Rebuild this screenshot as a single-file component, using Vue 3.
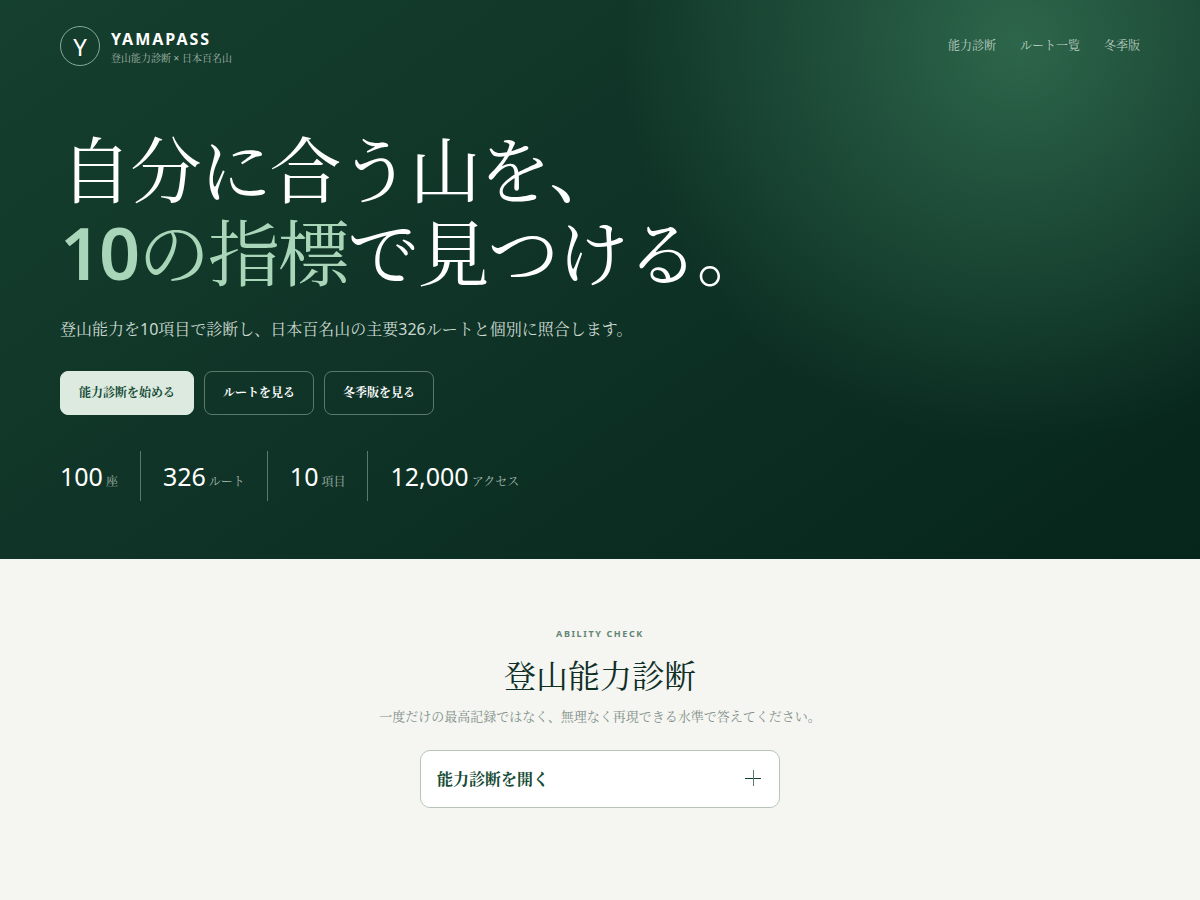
<script setup>
import { ref } from 'vue'

const links = ['能力診断', 'ルート一覧', '冬季版']
const stats = [
  { value: '100', unit: '座' },
  { value: '326', unit: 'ルート' },
  { value: '10', unit: '項目' },
  { value: '12,000', unit: 'アクセス' },
]
const open = ref(false)
</script>

<template>
  <div class="page" lang="ja">
    <header class="hero">
      <nav class="bar">
        <a class="brand" href="#">
          <span class="mark">Y</span>
          <span class="names">
            <strong>YAMAPASS</strong>
            <small>登山能力診断 × 日本百名山</small>
          </span>
        </a>
        <div class="links">
          <a v-for="link in links" :key="link" href="#">{{ link }}</a>
        </div>
      </nav>
      <h1>自分に合う山を、<br><em><b>10</b>の指標</em>で見つける。</h1>
      <p class="lead">登山能力を10項目で診断し、日本百名山の主要326ルートと個別に照合します。</p>
      <div class="actions">
        <button type="button" class="primary">能力診断を始める</button>
        <button type="button">ルートを見る</button>
        <button type="button">冬季版を見る</button>
      </div>
      <div class="stats">
        <div v-for="s in stats" :key="s.unit" class="stat">
          <b>{{ s.value }}</b><span>{{ s.unit }}</span>
        </div>
      </div>
    </header>
    <main class="check">
      <p class="eyebrow">ABILITY CHECK</p>
      <h2>登山能力診断</h2>
      <p class="note">一度だけの最高記録ではなく、無理なく再現できる水準で答えてください。</p>
      <button type="button" class="opener" :aria-expanded="open" @click="open = !open">
        <span>能力診断を開く</span>
        <svg width="16" height="16" viewBox="0 0 16 16" aria-hidden="true">
          <path d="M0 8.5H16" stroke="#123f2d" />
          <path d="M8.5 0V16" stroke="#5c7e6e" />
        </svg>
      </button>
    </main>
  </div>
</template>

<style>
body {
  margin: 0;
  background: #f5f6f2;
}
</style>

<style scoped>
.page {
  font-family: "Noto Sans", "Noto Serif CJK JP", serif;
  color: #102f27;
}
a {
  color: inherit;
  text-decoration: none;
}
button {
  font-family: inherit;
  cursor: pointer;
}
.hero {
  box-sizing: border-box;
  padding: 26px 60px 58px;
  color: #fff;
  background:
    radial-gradient(circle at 85% 8%, rgba(76, 154, 112, 0.5), transparent 35%),
    linear-gradient(145deg, #153f2e 0%, #103528 40%, #06251b 100%);
}
.bar {
  display: flex;
  justify-content: space-between;
  align-items: center;
}
.brand {
  display: flex;
  align-items: center;
  gap: 11px;
}
.mark {
  box-sizing: border-box;
  width: 40px;
  height: 40px;
  border: 1px solid #8aa99a;
  border-radius: 50%;
  font-size: 24px;
  line-height: 40px;
  text-align: center;
}
.names {
  display: grid;
}
.names strong {
  font-size: 16px;
  line-height: 24px;
  letter-spacing: 2px;
}
.names small {
  font-size: 10px;
  line-height: 15px;
  color: #a1b6aa;
}
.links {
  display: flex;
  gap: 24px;
  font-size: 12px;
  line-height: 18px;
  color: #bdcfc3;
}
h1 {
  margin: 62px 0 0;
  font-size: 72px;
  line-height: 83px;
  font-weight: 400;
  letter-spacing: -0.03em;
}
h1 em {
  font-style: normal;
  color: #a9d6b8;
}
h1 b {
  font-weight: 600;
}
.lead {
  margin: 21px 0 0;
  font-size: 16px;
  line-height: 29px;
  color: #cbd8d0;
}
.actions {
  display: flex;
  flex-wrap: wrap;
  gap: 10px;
  margin-top: 27px;
}
.actions button {
  height: 44px;
  padding: 0 18px 2px;
  border: 1px solid #587a6b;
  border-radius: 8px;
  background: transparent;
  color: #fff;
  font-size: 12px;
  font-weight: 700;
}
.actions .primary {
  background: #dceae0;
  border-color: #dceae0;
  color: #164b36;
}
.stats {
  display: flex;
  margin-top: 36px;
}
.stat {
  display: flex;
  align-items: baseline;
  gap: 3px;
  height: 50px;
  padding-right: 22px;
  margin-right: 22px;
  line-height: 50px;
  border-right: 1px solid #587a6b;
}
.stat:last-child {
  border: 0;
}
.stat b {
  font-size: 25px;
  font-weight: 400;
}
.stat span {
  font-size: 12px;
  color: #a1b6aa;
}
.check {
  display: flex;
  flex-direction: column;
  align-items: center;
  padding: 67px 20px 92px;
}
.eyebrow {
  margin: 0;
  font-size: 9px;
  line-height: 16px;
  font-weight: 700;
  letter-spacing: 0.18em;
  color: #638575;
}
h2 {
  margin: 10px 0 0;
  font-size: 32px;
  line-height: 48px;
  font-weight: 400;
}
.note {
  margin: 5px 0 0;
  font-size: 13px;
  line-height: 22px;
  color: #818f87;
}
.opener {
  box-sizing: border-box;
  display: flex;
  justify-content: space-between;
  align-items: center;
  width: 100%;
  max-width: 360px;
  height: 58px;
  margin-top: 23px;
  padding: 0 18px 2px 16px;
  border: 1px solid #b5c5ba;
  border-radius: 10px;
  background: #fff;
  color: #164b36;
  font-size: 16px;
  font-weight: 700;
}
</style>
